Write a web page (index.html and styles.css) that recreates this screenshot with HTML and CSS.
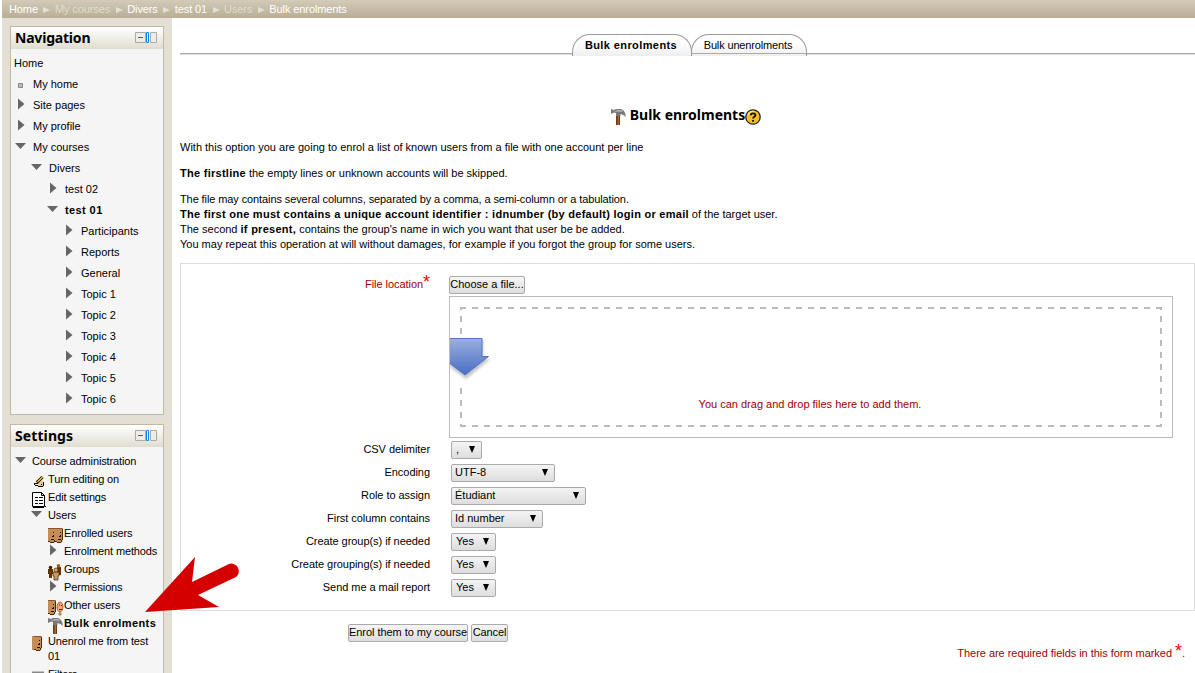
FILE: index.html
```html
<!DOCTYPE html>
<html lang="en">
<head>
<meta charset="utf-8">
<title>Bulk enrolments</title>
<link rel="stylesheet" href="styles.css">
</head>
<body>
<svg width="0" height="0" class="defs">
  <defs>
    <symbol id="down" viewBox="0 0 16 16"><path d="M0 5h11L5.500 11z" fill="#666"/></symbol>
    <symbol id="right" viewBox="0 0 16 16"><path d="M3 2.500l6.500 5.500L3 13.500z" fill="#666"/></symbol>
    <symbol id="hammer" viewBox="0 0 16 16">
      <path d="M5 6h4v10H5z" fill="#6b3a18"/><path d="M6.500 7H8v9H6.500z" fill="#a8672c"/>
      <path d="M0 0l3 1 2-1h5l3 2 1.500 3v3l-2-2-3-1v2H5V4L3 3.500 0 5z" fill="#777"/><path d="M1 1.500l3 1 2-1.500h4l2 2-5-.5z" fill="#b5b5b5"/>
    </symbol>
    <symbol id="face" viewBox="0 0 8 16">
      <path d="M0 0h8v11l-1 3-1 1H2v-2H0z" fill="#c68c55"/><path d="M0 0h7v1H0z" fill="#8a5828"/>
      <path d="M7 1h1v11H7zM6 12h1v2H6zM2 14h4v1H2zM0 13h2v1H0z" fill="#4a2a0c"/>
      <path d="M5 4h1v1H5zM5 7h1v2H4V8h1zM3 11h3v1H3z" fill="#201004"/>
    </symbol>
    <symbol id="dock" viewBox="0 0 22 11">
      <path d="M.5.5h10v10H.5z" fill="#eeece6" stroke="#aaa"/><path d="M3 5h5v1H3z" fill="#665544"/>
      <path d="M11.500.5h2v10h-2z" fill="#fff" stroke="#0a84e8"/><path d="M15.500.5h6v10h-6z" fill="#eeece6" stroke="#aaa"/>
    </symbol>
  </defs>
</svg>
<header class="crumbs">
  <a>Home</a><i></i><a class="dim">My courses</a><i></i><a>Divers</a><i></i><a>test 01</a><i></i><a class="dim">Users</a><i></i><a>Bulk enrolments</a>
</header>
<div class="page">
  <aside class="side">
    <section class="block">
      <h2 class="navhead">Navigation <svg class="dock"><use href="#dock"/></svg></h2>
      <ul class="tree nav">
        <li class="root">Home</li>
        <li><svg class="ic" viewBox="0 0 16 16"><path d="M3.500 8.500h4v4h-4z" fill="#bbb" stroke="#888"/></svg>My home</li>
        <li><svg class="ic"><use href="#right"/></svg>Site pages</li>
        <li><svg class="ic"><use href="#right"/></svg>My profile</li>
        <li><svg class="ic"><use href="#down"/></svg>My courses</li>
        <li class="l1"><svg class="ic"><use href="#down"/></svg>Divers</li>
        <li class="l2"><svg class="ic"><use href="#right"/></svg>test 02</li>
        <li class="l2"><svg class="ic"><use href="#down"/></svg><b>test 01</b></li>
        <li class="l3"><svg class="ic"><use href="#right"/></svg>Participants</li>
        <li class="l3"><svg class="ic"><use href="#right"/></svg>Reports</li>
        <li class="l3"><svg class="ic"><use href="#right"/></svg>General</li>
        <li class="l3"><svg class="ic"><use href="#right"/></svg>Topic 1</li>
        <li class="l3"><svg class="ic"><use href="#right"/></svg>Topic 2</li>
        <li class="l3"><svg class="ic"><use href="#right"/></svg>Topic 3</li>
        <li class="l3"><svg class="ic"><use href="#right"/></svg>Topic 4</li>
        <li class="l3"><svg class="ic"><use href="#right"/></svg>Topic 5</li>
        <li class="l3"><svg class="ic"><use href="#right"/></svg>Topic 6</li>
      </ul>
    </section>
    <section class="block">
      <h2>Settings <svg class="dock"><use href="#dock"/></svg></h2>
      <ul class="tree settings">
        <li><svg class="ic"><use href="#down"/></svg>Course administration</li>
        <li class="l1"><svg class="ic low" viewBox="0 0 16 16"><path d="M4 6l4-1 4 3v4l-2 1H6V9H4z" fill="#f0c8a0"/><path d="M2 9h4v1H2zM3 11h3v1H3zM6 12h5v1H6zM11 8h1v4h-1zM2 10h1v1H2zM9 10h1v1H9z"/><path d="M5 8.500L10.500 3" stroke="#000" stroke-width="3"/><path d="M5.500 8L10.500 3" stroke="#f0dc20" stroke-width="1.300"/></svg>Turn editing on</li>
        <li class="l1"><svg class="ic low" viewBox="0 0 16 16"><path d="M.5.5h9l3 3v11H.5z" fill="#fff" stroke="#000"/><path d="M9.500.5v3h3" fill="none" stroke="#000"/><path d="M3 5h3v1H3zM7 5h4v1H7zM3 8h3v1H3zM7 8h4v1H7zM3 11h3v1H3zM7 11h4v1H7zM1 15h11v1H1zM13 14h1v1h-1z"/></svg>Edit settings</li>
        <li class="l1"><svg class="ic"><use href="#down"/></svg>Users</li>
        <li class="l2"><svg class="ic low" viewBox="0 0 16 16"><use href="#face" width="8" height="16"/><use href="#face" width="8" height="16" x="7"/></svg>Enrolled users</li>
        <li class="l2"><svg class="ic"><use href="#right"/></svg>Enrolment methods</li>
        <li class="l2"><svg class="ic low" viewBox="0 0 16 16"><path d="M0 5h5v5H4v4H1v-4H0zM9 3h4v8H9z" fill="#663300"/><circle cx="2.500" cy="3.500" r="1.800" fill="#432005"/><circle cx="10.500" cy="1.800" r="1.800" fill="#9a6030"/><path d="M5 8h6v4h-1v4H6v-4H5z" fill="#c99a60" stroke="#3a2008" stroke-width=".7"/><circle cx="8" cy="6" r="2" fill="#d8ae78" stroke="#3a2008" stroke-width=".7"/></svg>Groups</li>
        <li class="l2"><svg class="ic"><use href="#right"/></svg>Permissions</li>
        <li class="l2"><svg class="ic low" viewBox="0 0 16 16"><use href="#face" width="8" height="16"/><path d="M12 10v6M10 14h4" stroke="#b06828"/><ellipse cx="12" cy="7" rx="3" ry="5" fill="#f4a878" stroke="#a04818" stroke-width=".8"/><path d="M11 4.500h1v1h-1zM13 5h1v1h-1zM11 9h3v1h-3z" fill="#602010"/></svg>Other users</li>
        <li class="l2"><svg class="ic low"><use href="#hammer"/></svg><b>Bulk enrolments</b></li>
        <li class="l1 two"><svg class="ic low" viewBox="0 0 16 16"><path d="M0 0h3v14H0z" fill="#c68c55"/><use href="#face" width="8" height="16" x="2"/></svg><span>Unenrol me from test 01</span></li>
        <li class="l1"><svg class="ic" viewBox="0 0 16 16"><path d="M1 6.500h12v4H1z" fill="#888"/></svg>Filters</li>
      </ul>
    </section>
  </aside>
  <main class="main">
    <nav class="tabs"><a class="tab on">Bulk enrolments</a><a class="tab second">Bulk unenrolments</a></nav>
    <h1><svg class="tool"><use href="#hammer"/></svg><span>Bulk enrolments</span><svg class="help" viewBox="0 0 16 16"><circle cx="8" cy="8" r="7.200" fill="#f6bd26" stroke="#222" stroke-width="1.300"/><path d="M3 6a5.500 5.500 0 0 1 6-3.500" fill="none" stroke="#ffe98b" stroke-width="1.300"/><path d="M5.700 6.300c0-2.700 4.700-2.700 4.700 0 0 1.600-2.300 1.500-2.300 3.300M8.100 10.900v1.900" fill="none" stroke="#111" stroke-width="1.800"/></svg></h1>
    <div class="intro">
      <p>With this option you are going to enrol a list of known users from a file with one account per line</p>
      <p><b>The firstline</b> the empty lines or unknown accounts will be skipped.</p>
      <p><span class="tight">The file may contains several columns, separated by a comma, a semi-column or a tabulation.</span><br><b>The first one must contains a unique account identifier : idnumber (by default) login or email</b> of the target user.<br>The second <b>if present,</b> contains the group's name in wich you want that user be be added.<br>You may repeat this operation at will without damages, for example if you forgot the group for some users.</p>
    </div>
    <form>
      <div class="fields">
        <div class="row file"><label class="req">File location<sup>*</sup></label>
          <div class="picker"><button type="button" class="btn choose">Choose a file...</button>
            <div class="drop"><div class="dashes"><svg class="arrow" viewBox="0 0 44 52"><defs><linearGradient id="blue" x1="0" y1="0" x2="0" y2="1"><stop offset="0" stop-color="#9bb0e1"/><stop offset="1" stop-color="#4a6dc3"/></linearGradient><filter id="soft"><feGaussianBlur stdDeviation="1.600"/></filter></defs><path d="M0 0h44v52H0z" fill="#fff"/><path d="M0 5h33v19h7L16 44 0 32z" fill="#999" opacity=".6" filter="url(#soft)"/><path d="M-2 3.500h34v18h6.500L15 40-2 27z" fill="url(#blue)" stroke="#5577c5"/></svg><span>You can drag and drop files here to add them.</span></div></div>
          </div></div>
        <div class="row"><label>CSV delimiter</label><div class="sel w1">,<i></i></div></div>
        <div class="row"><label>Encoding</label><div class="sel w2">UTF-8<i></i></div></div>
        <div class="row"><label>Role to assign</label><div class="sel w3">Étudiant<i></i></div></div>
        <div class="row"><label>First column contains</label><div class="sel w4">Id number<i></i></div></div>
        <div class="row"><label>Create group(s) if needed</label><div class="sel w5">Yes<i></i></div></div>
        <div class="row"><label>Create grouping(s) if needed</label><div class="sel w5">Yes<i></i></div></div>
        <div class="row"><label>Send me a mail report</label><div class="sel w5">Yes<i></i></div></div>
      </div>
      <div class="actions"><button type="button" class="btn enrol">Enrol them to my course</button><button type="button" class="btn cancel">Cancel</button></div>
      <p class="note">There are required fields in this form marked <sup>*</sup>.</p>
    </form>
  </main>
</div>
<svg class="pointer" viewBox="0 0 96 58"><path d="M1 56L51 1l-3 25L85 8a7.500 7.500 0 0 1 7 13L54 39l21 12z" fill="#d40000"/></svg>
</body>
</html>
```
FILE: styles.css
```css
* { box-sizing: border-box; }
html, body { height: 673px; overflow: hidden; }
body { margin: 0; padding-left: 2px; background: #fff; color: #000; font: 11px/15px "Liberation Sans", Arial, sans-serif; position: relative; }
p, h1, h2, ul { margin: 0; padding: 0; }
svg { display: block; flex: none; overflow: visible; }
.defs { position: absolute; }

.crumbs { height: 18px; display: flex; align-items: center; padding-left: 7px; color: #fff; letter-spacing: -.1px; background: linear-gradient(#d2cbb8, #b9ae95); }
.crumbs .dim { color: #e0dbcf; }
.crumbs i { border-left: 7px solid #e3dfd3; border-top: 3px solid transparent; border-bottom: 3px solid transparent; margin: 2px 4.500px 0 5.500px; }

.page { display: flex; height: 655px; }
.side { width: 170px; flex: none; background: #e3dfd4; padding: 8px 8px 0; overflow: hidden; display: flex; flex-direction: column; gap: 9px; }
.block { width: 154px; flex: none; border: 1px solid #c2b9a0; background: #f5f5f5; }
.block h2 { height: 22px; padding: 0 6px 0 4px; display: flex; align-items: center; justify-content: space-between; font: bold 14px/22px "Noto Sans", sans-serif; letter-spacing: .1px; background: linear-gradient(#fff, #e0dccf); }
.block .navhead { letter-spacing: -.2px; }
.dock { width: 22px; height: 11px; margin-top: -1px; }
.tree { list-style: none; }
.tree li { display: flex; white-space: nowrap; }
.tree b, .tab.on { letter-spacing: .4px; }
.nav { padding: 4px 0 4px; }
.nav li { height: 21px; line-height: 21px; padding-left: 4px; }
.nav .root { padding-left: 3px; }
.ic { width: 16px; height: 16px; }
.nav .ic { margin: 1px 2px 0 0; }
.settings { padding: 5px 0 0; letter-spacing: -.13px; }
.settings li { height: 18px; line-height: 18px; padding-left: 4px; }
.settings .ic { margin-right: 1px; }
.tree .l1 { padding-left: 20px; }
.tree .l2 { padding-left: 36px; }
.tree .l3 { padding-left: 52px; }
.settings .low { margin: 4px 0 0 1px; }
.settings .two { height: 33px; line-height: 15px; white-space: normal; }
.two span { padding-top: 2px; width: 106px; }

.main { flex: 1; min-width: 0; padding: 16px 0 0 8px; }
.tabs { height: 22px; display: flex; justify-content: center; padding-left: 4px; background: linear-gradient(#aaa, #aaa) 0 19px / 100% 1px no-repeat, linear-gradient(#ddd, #ddd) 0 20px / 100% 1px no-repeat; }
.tab { width: 120px; height: 22px; border: 1px solid #999; border-bottom: 0; border-radius: 18px 18px 0 0; text-align: center; line-height: 21px; background: linear-gradient(#fff 40%, #eee); }
.tab.on { font-weight: bold; padding-right: 2px; }
.tab.second { width: 116px; margin-left: -1px; padding-right: 2px; letter-spacing: -.15px; background: linear-gradient(#aaa, #aaa) 0 18px / 100% 1px no-repeat, linear-gradient(#fff 40%, #eee); }
h1 { height: 23px; margin-top: 48px; display: flex; justify-content: center; font: bold 14px/22px "Noto Sans", sans-serif; padding-right: 3px; }
.tool { width: 16px; height: 16px; margin: 5px 3px 0 0; }
.help { width: 16px; height: 16px; margin: 5px 0 0; }
.intro { margin-top: 13px; display: grid; gap: 11px; white-space: nowrap; }
.intro b { letter-spacing: .27px; }
.tight { letter-spacing: -.1px; }

.fields { margin-top: 11px; height: 348px; border: 1px solid #ddd; padding-top: 12px; }
.row { display: flex; height: 23px; }
.row label { width: 250px; text-align: right; line-height: 17px; letter-spacing: -.05px; padding-right: 1px; }
.row.file { height: 165px; }
.req, .note { color: #a00000; }
sup { color: #f00; font-size: 18px; line-height: 0; vertical-align: 0; }
.row.file label { white-space: nowrap; }
.picker { margin-left: 18px; }
.btn { height: 18px; border: 1px solid #aaa; border-radius: 2px; padding: 0 0 1px; margin: 0; font: inherit; color: #000; background: linear-gradient(#f6f6f6, #ddd); white-space: nowrap; display: block; }
.choose { width: 76px; }
.drop { width: 724px; height: 142px; margin-top: 2px; border: 1px solid #bbb; padding: 10px; }
.dashes { --h: repeating-linear-gradient(90deg, #bbb 0 6px, transparent 6px 12px); --v: repeating-linear-gradient(#bbb 0 3px, transparent 3px 9px, #bbb 9px 12px);
  width: 702px; height: 120px; display: flex; align-items: flex-start; background: var(--h) 0 0 / 100% 2px no-repeat, var(--h) 0 100% / 100% 2px no-repeat, var(--v) 0 0 / 2px 100% no-repeat, var(--v) 100% 0 / 2px 100% no-repeat; }
.arrow { width: 44px; height: 52px; margin: 28px 0 0 -10px; overflow: hidden; }
.dashes span { flex: 1; margin: 90px 36px 0 0; text-align: center; color: #a00000; }
.sel { margin-left: 20px; height: 18px; border: 1px solid #aaa; border-radius: 2px; background: linear-gradient(#f4f4f4, #ddd); padding: 0 6px 0 3px; display: flex; justify-content: space-between; line-height: 15px; }
.sel i { border-top: 7px solid #000; border-left: 3.500px solid transparent; border-right: 3.500px solid transparent; height: 0; margin-top: 4px; }
.w1 { width: 31px; padding-left: 4px; } .w2 { width: 104px; } .w3 { width: 135px; } .w4 { width: 92px; } .w5 { width: 45px; padding-left: 4px; }
.actions { display: flex; gap: 3px; margin: 13px 0 0 168px; }
.enrol { width: 120px; letter-spacing: -.05px; } .cancel { width: 37px; letter-spacing: -.1px; }
.note { text-align: right; padding-right: 10px; margin-top: 4px; letter-spacing: -.04px; }
.pointer { position: absolute; left: 144px; top: 556px; width: 96px; height: 58px; }
```
